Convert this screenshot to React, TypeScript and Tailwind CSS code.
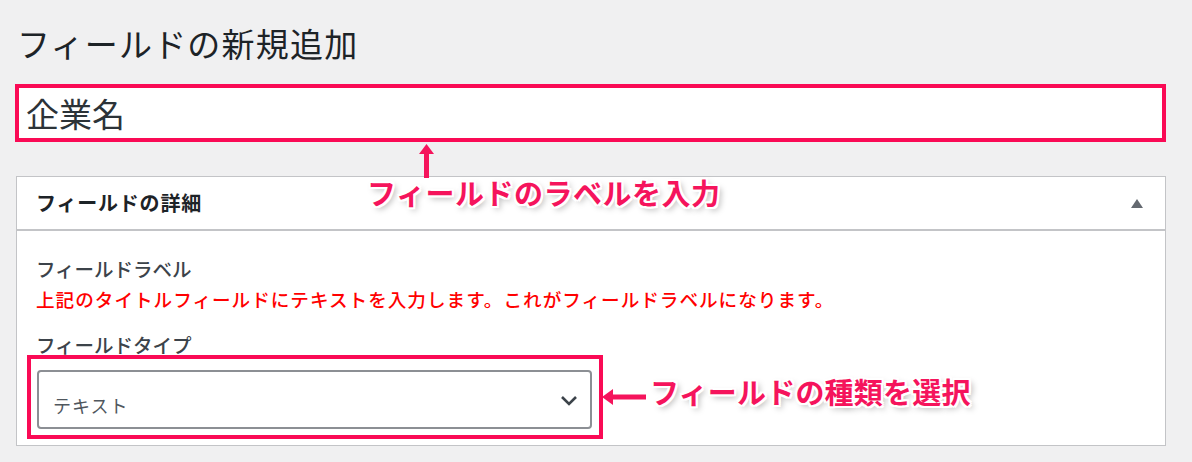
const jp = { fontFamily: '"Noto Sans CJK JP", "Noto Sans", sans-serif' };

const calloutShadow =
  "[text-shadow:2px_0_0_#fff,-2px_0_0_#fff,0_2px_0_#fff,0_-2px_0_#fff,2px_2px_0_#fff,-2px_-2px_0_#fff,2px_-2px_0_#fff,-2px_2px_0_#fff,3px_3px_6px_rgba(0,0,0,0.35)]";

function Callout({ text, className }: { text: string; className: string }) {
  return (
    <div
      className={`absolute text-[29px] font-bold leading-none text-[#f5145c] ${calloutShadow} ${className}`}
    >
      {text}
    </div>
  );
}

export default function App() {
  return (
    <div
      className="relative w-[1192px] h-[462px] overflow-hidden bg-[#f0f0f1] text-[#1d2327]"
      style={jp}
    >
      <h1 className="pl-[17px] pt-[25px] h-[84px] text-[33px] font-normal leading-[36px] tracking-[1.2px] text-[#1d2327]">
        フィールドの新規追加
      </h1>

      <div className="ml-[15px] w-[1151px] h-[58px] rounded-l-[3px] border-l-2 border-[#8c8f94] bg-white">
        <div className="h-full border-4 border-[#fa0a55] -ml-[2px] flex items-center pl-[7px] text-[33px] leading-none text-[#2c3338]">
          企業名
        </div>
      </div>

      <div className="mt-[34px] ml-[16px] w-[1150px] h-[270px] border border-[#c3c4c7] bg-white">
        <div className="h-[54px] border-b-2 border-[#c3c4c7] flex items-center justify-between pl-[19px] pr-[22px]">
          <span className="text-[20px] font-bold leading-none tracking-[0.8px] text-[#1d2327]">
            フィールドの詳細
          </span>
          <span className="w-0 h-0 border-l-[6px] border-r-[6px] border-b-[9px] border-l-transparent border-r-transparent border-b-[#646970]" />
        </div>

        <div className="pl-[19px] pt-[26px]">
          <div className="text-[19.5px] font-medium leading-[24px] text-[#3c434a]">
            フィールドラベル
          </div>
          <div className="mt-[6px] text-[18.6px] font-medium leading-[24px] text-[#ff0000] tracking-[1px]">
            上記のタイトルフィールドにテキストを入力します。これがフィールドラベルになります。
          </div>
          <div className="mt-[22px] text-[19.5px] font-medium leading-[24px] text-[#3c434a]">
            フィールドタイプ
          </div>
          <div className="-ml-[9px] mt-[-2px] w-[576px] h-[84px] border-4 border-[#fa0a55] pt-[11px] pl-[6px]">
            <div className="w-[555px] h-[59px] rounded-[4px] border-2 border-[#8c8f94] flex items-center justify-between pl-[14px] pr-[12px]">
              <span className="mt-[10px] text-[18px] leading-none tracking-[1px] text-[#50575e]">
                テキスト
              </span>
              <svg width="18" height="12" viewBox="0 0 18 12" className="mt-[2px]">
                <path d="M2 2 L9 9 L16 2" fill="none" stroke="#3c434a" strokeWidth="2.6" />
              </svg>
            </div>
          </div>
        </div>
      </div>

      {/* up arrow to title field */}
      <svg className="absolute left-[416px] top-[144px]" width="20" height="34" viewBox="0 0 20 34">
        <rect x="8" y="8" width="5" height="26" fill="#f5145c" />
        <path d="M10.5 0 L18 10 L3 10 Z" fill="#f5145c" />
      </svg>
      <Callout text="フィールドのラベルを入力" className="left-[367px] top-[178px] tracking-[0.5px]" />

      {/* left arrow to select */}
      <svg className="absolute left-[602px] top-[387px]" width="44" height="20" viewBox="0 0 44 20">
        <rect x="8" y="7.5" width="36" height="5" fill="#f5145c" />
        <path d="M0 10 L11 2 L11 18 Z" fill="#f5145c" />
      </svg>
      <Callout text="フィールドの種類を選択" className="left-[650px] top-[377px] tracking-[0.2px]" />
    </div>
  );
}
